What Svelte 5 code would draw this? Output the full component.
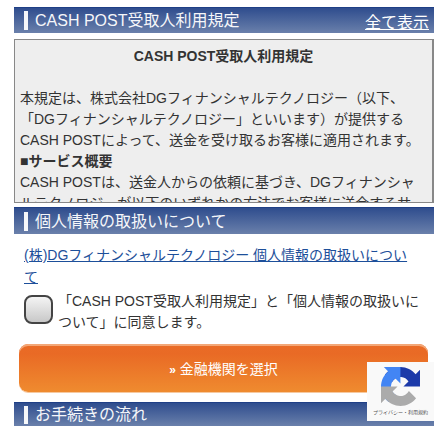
<script>
  const terms = [
    '本規定は、株式会社DGフィナンシャルテクノロジー（以下、',
    '「DGフィナンシャルテクノロジー」といいます）が提供する',
    'CASH POSTによって、送金を受け取るお客様に適用されます。'
  ];
</script>

<main class="page">
  <header class="bar">
    <h2>CASH POST受取人利用規定</h2>
    <a href="#all" class="all">全て表示</a>
  </header>

  <section class="terms">
    <h3>CASH POST受取人利用規定</h3>
    <p class="lead">{#each terms as t}{t}<br />{/each}</p>
    <p class="strong">■サービス概要</p>
    <p>CASH POSTは、送金人からの依頼に基づき、DGフィナンシャルテクノロジーが以下のいずれかの方法でお客様に送金するサービスです。</p>
  </section>

  <header class="bar second">
    <h2>個人情報の取扱いについて</h2>
  </header>

  <a class="policy" href="#policy">(株)DGフィナンシャルテクノロジー 個人情報の取扱いについて</a>

  <label class="agree">
    <span class="check"></span>
    <span class="agree-text">「CASH POST受取人利用規定」と「個人情報の取扱いについて」に同意します。</span>
  </label>

  <div class="btn-wrap">
    <button class="btn"><span class="chev">&#187;</span> 金融機関を選択</button>
    <div class="recaptcha">
      <svg viewBox="0 0 64 64" width="39" height="39" aria-hidden="true">
        <path d="M64 31.955l-.033-1.37V4.687l-7.16 7.16C50.947 4.674 41.97 0 31.98 0 21.58 0 12.34 4.96 6.5 12.64l11.73 11.86a15.55 15.55 0 0 1 4.75-5.33c2.05-1.6 4.95-2.9 9-2.9.49 0 .87.07 1.15.18 5.03.4 9.4 3.17 11.96 7.2l-8.3 8.3c10.5-.04 22.4-.07 27.2 0" fill="#1c3aa9" />
        <path d="M31.95 0l-1.37.03H4.69l7.16 7.16C4.67 13.05 0 22.03 0 32.02c0 10.4 4.96 19.64 12.64 25.48l11.86-11.73a15.55 15.55 0 0 1-5.33-4.75c-1.6-2.05-2.9-4.95-2.9-9 0-.49.07-.87.18-1.15.4-5.03 3.17-9.4 7.2-11.96l8.3 8.3c-.04-10.5-.07-22.4 0-27.2" fill="#4285f4" />
        <path d="M0 32.05l.03 1.37v25.9l7.16-7.16C13.05 59.33 22.03 64 32.02 64c10.4 0 19.64-4.96 25.48-12.64L45.77 39.5a15.55 15.55 0 0 1-4.75 5.33c-2.05 1.6-4.95 2.9-9 2.9-.49 0-.87-.07-1.15-.18-5.03-.4-9.4-3.17-11.96-7.2l8.3-8.3c-10.5.04-22.4.07-27.2 0" fill="#ababab" />
      </svg>
      <span>プライバシー・利用規約</span>
    </div>
  </div>

  <header class="bar third">
    <h2>お手続きの流れ</h2>
  </header>
</main>

<style>
  :global(body) {
    margin: 0;
    background: #fff;
  }
  .page {
    position: relative;
    width: 420px;
    height: 440px;
    padding: 7px 14px 0;
    overflow: hidden;
    font-family: "Liberation Sans", "Noto Sans CJK JP", sans-serif;
    font-size: 14px;
    color: #333;
  }
  .bar {
    display: flex;
    align-items: center;
    justify-content: space-between;
    height: 26px;
    padding: 0 5px 0 10px;
    background: linear-gradient(#2f4d8e, #6a80ab);
    border-top: 1px solid #1f3f86;
    box-sizing: border-box;
  }
  .bar h2 {
    margin: 0;
    padding-left: 7px;
    border-left: 4px solid #fff;
    font-size: 16px;
    font-weight: 400;
    line-height: 19px;
    color: #fff;
    opacity: 0.95;
  }
  .all {
    font-size: 16px;
    color: #fff;
  }
  .terms {
    height: 164px;
    margin-top: 6px;
    padding: 5px 5px 0;
    overflow: hidden;
    background: #eee;
    border: 1px solid #888;
    border-right-width: 2px;
    box-sizing: border-box;
    line-height: 21px;
  }
  .terms h3 {
    margin: 0 0 21px;
    font-size: 14px;
    text-align: center;
    line-height: 22px;
  }
  .terms p {
    margin: 0;
  }
  .strong {
    font-weight: 700;
  }
  .second {
    margin-top: 4px;
    height: 27px;
  }
  .policy {
    display: block;
    margin: 10px 22px 0 10px;
    line-height: 22px;
    color: #1d4f9a;
  }
  .agree {
    display: flex;
    align-items: flex-start;
    gap: 5px;
    margin: 3px 6px 0 10px;
    line-height: 21px;
  }
  .check {
    flex: none;
    width: 25px;
    height: 25px;
    margin-top: 4px;
    border: 2px solid #444;
    border-radius: 8px;
    background: linear-gradient(#f4f4f4, #c8c8c8);
  }
  .btn-wrap {
    position: relative;
    margin-top: 11px;
    padding: 0 6px 0 5px;
  }
  .btn {
    display: block;
    width: 100%;
    height: 48px;
    border: 0;
    border-radius: 9px;
    background: linear-gradient(#ea6c27 0, #e96a25 20%, #ef8b2f);
    box-shadow: inset 0 2px 0 #f3a777, 0 1px 0 #f6c9a0;
    color: #fff;
    font-family: inherit;
    font-size: 14px;
  }
  .chev {
    font-size: 12px;
    font-weight: 700;
  }
  .recaptcha {
    position: absolute;
    right: 0;
    top: 18px;
    display: flex;
    flex-direction: column;
    align-items: center;
    width: 67px;
    height: 59px;
    padding-top: 5px;
    background: #f9f9f9;
    box-sizing: border-box;
    z-index: 2;
  }
  .recaptcha span {
    margin-top: 2px;
    font-size: 5px;
    line-height: 8px;
    color: #555;
    white-space: nowrap;
  }
  .third {
    margin-top: 10px;
    height: 24px;
  }
  .third h2 {
    line-height: 18px;
  }
</style>
